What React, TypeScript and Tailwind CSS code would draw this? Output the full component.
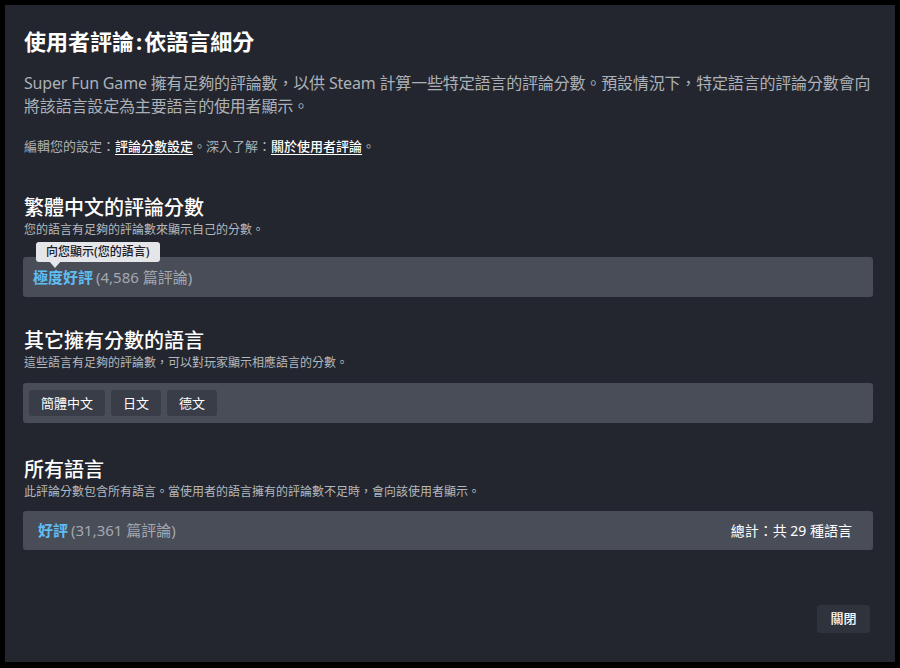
import React from 'react'

const font = { fontFamily: '"Noto Sans", "Noto Sans CJK TC", sans-serif' }

function Section({ title, sub }: { title: string; sub: string }) {
  return (
    <div>
      <h2 className="text-[20px] leading-[26px] font-medium text-white">{title}</h2>
      <p className="mt-[1px] text-[12px] leading-[16px] text-[#b4b8be]">{sub}</p>
    </div>
  )
}

export default function App() {
  return (
    <div className="w-[900px] h-[668px] bg-black pt-[5px] pl-[5px]" style={font}>
      <div className="w-[890px] h-[657px] bg-[#23262e] pt-[21px] pl-[18px] pr-[22px] flex flex-col">
        <h1 className="pl-[1px] text-[22px] leading-[30px] font-bold text-white">
          使用者評論<span className="mx-[2px]">:</span>依語言細分
        </h1>
        <p className="mt-[16px] pl-[1px] mr-[-10px] text-[16px] leading-[23px] tracking-[-0.17px] text-[#acb1b8]">
          Super Fun Game 擁有足夠的評論數，以供 Steam 計算一些特定語言的評論分數。預設情況下，特定語言的評論分數會向將該語言設定為主要語言的使用者顯示。
        </p>
        <p className="mt-[19px] pl-[1px] text-[13px] leading-[19px] text-[#acb1b8]">
          編輯您的設定：
          <span className="text-white font-medium underline underline-offset-[3px]">評論分數設定</span>
          。深入了解：
          <span className="text-white font-medium underline underline-offset-[3px]">關於使用者評論</span>。
        </p>

        <div className="mt-[39px] pl-[1px]">
          <Section title="繁體中文的評論分數" sub="您的語言有足夠的評論數來顯示自己的分數。" />
        </div>
        <div className="relative mt-[19px] h-[40px] rounded-[3px] bg-[#494d58] flex items-center pl-[10px] text-[15px]">
          <span className="text-[#5fbdf3] font-bold">極度好評</span>
          <span className="ml-[3px] text-[#a3a8b0]">(4,586 篇評論)</span>
          <div className="absolute left-[13px] top-[-15px] h-[20px] px-[10px] rounded-[3px] bg-[#e4e6ea] text-[12px] leading-[20px] text-[#1e2026] font-medium">
            向您顯示(您的語言)
            <div className="absolute left-[13px] top-[19px] w-0 h-0 border-l-[6px] border-r-[6px] border-t-[7px] border-l-transparent border-r-transparent border-t-[#e4e6ea]" />
          </div>
        </div>

        <div className="mt-[31px] pl-[1px]">
          <Section title="其它擁有分數的語言" sub="這些語言有足夠的評論數，可以對玩家顯示相應語言的分數。" />
        </div>
        <div className="mt-[12px] h-[40px] rounded-[3px] bg-[#494d58] flex items-center pl-[6px] gap-[6px]">
          {['簡體中文', '日文', '德文'].map((l) => (
            <span
              key={l}
              className="h-[26px] px-[12px] rounded-[3px] bg-[#393d47] text-[13px] leading-[26px] text-white"
            >
              {l}
            </span>
          ))}
        </div>

        <div className="mt-[34px] pl-[1px]">
          <Section title="所有語言" sub="此評論分數包含所有語言。當使用者的語言擁有的評論數不足時，會向該使用者顯示。" />
        </div>
        <div className="mt-[11px] h-[39px] rounded-[3px] bg-[#494d58] flex items-center pl-[15px] pr-[21px] text-[15px]">
          <span className="text-[#5fbdf3] font-bold">好評</span>
          <span className="ml-[3px] text-[#a3a8b0]">(31,361 篇評論)</span>
          <span className="ml-auto text-[14px] text-white">總計：共 29 種語言</span>
        </div>

        <div className="mt-[55px] flex justify-end pr-[3px]">
          <button className="h-[28px] w-[53px] rounded-[3px] bg-[#2f333c] text-[13px] text-white font-medium">
            關閉
          </button>
        </div>
      </div>
    </div>
  )
}
